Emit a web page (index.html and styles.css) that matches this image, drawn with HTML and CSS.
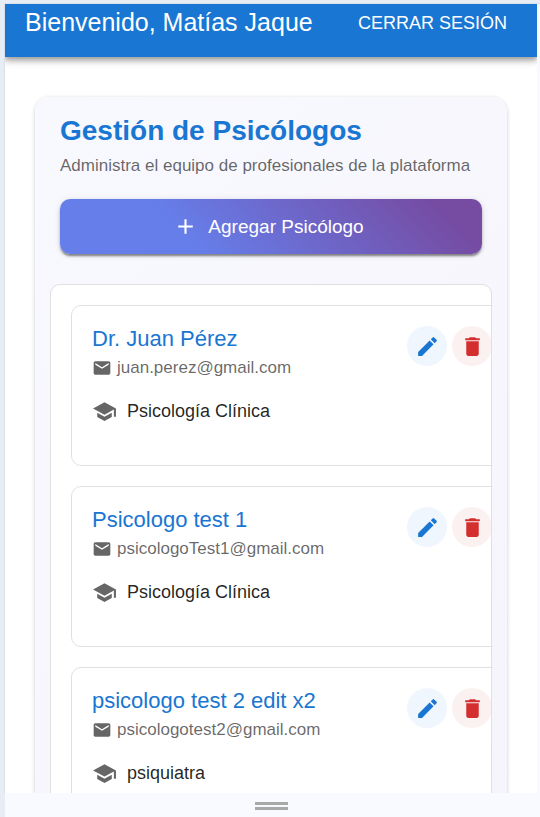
FILE: index.html
```html
<!DOCTYPE html>
<html lang="es">
<head>
<meta charset="utf-8">
<meta name="viewport" content="width=device-width, initial-scale=1">
<title>Gestión de Psicólogos</title>
<link rel="stylesheet" href="styles.css">
</head>
<body>
<svg class="sprite" aria-hidden="true">
  <symbol id="mail" viewBox="0 0 24 24"><path d="M20 4H4c-1.100 0-1.990.9-1.990 2L2 18c0 1.100.9 2 2 2h16c1.100 0 2-.9 2-2V6c0-1.100-.9-2-2-2m0 4-8 5-8-5V6l8 5 8-5z"/></symbol>
  <symbol id="school" viewBox="0 0 24 24"><path d="M5 13.180v4L12 21l7-3.820v-4L12 17zM12 3 1 9l11 6 9-4.910V17h2V9z"/></symbol>
  <symbol id="edit" viewBox="0 0 24 24"><path d="M3 17.250V21h3.750L17.810 9.940l-3.750-3.750zM20.710 7.040c.39-.39.39-1.020 0-1.410l-2.340-2.340a.996.996 0 0 0-1.410 0l-1.830 1.830 3.750 3.750z"/></symbol>
  <symbol id="delete" viewBox="0 0 24 24"><path d="M6 19c0 1.100.9 2 2 2h8c1.100 0 2-.9 2-2V7H6zM19 4h-3.500l-1-1h-5l-1 1H5v2h14z"/></symbol>
  <symbol id="add" viewBox="0 0 24 24"><path d="M19 13h-6v6h-2v-6H5v-2h6V5h2v6h6z"/></symbol>
</svg>
<div class="device">
  <div class="screen">
    <header class="appbar">
      <span class="welcome">Bienvenido, Matías Jaque</span>
      <button class="logout" type="button">CERRAR SESIÓN</button>
    </header>
    <main class="content">
      <section class="panel">
        <div class="panel-head">
          <h1 class="title">Gestión de Psicólogos</h1>
          <p class="subtitle">Administra el equipo de profesionales de la plataforma</p>
          <button class="add" type="button"><svg class="icon icon-add"><use href="#add"/></svg>Agregar Psicólogo</button>
        </div>
        <div class="list">
          <article class="card">
            <div class="card-head">
              <div class="person">
                <h2 class="name">Dr. Juan Pérez</h2>
                <p class="email"><svg class="icon-mail"><use href="#mail"/></svg>juan.perez@gmail.com</p>
              </div>
              <div class="actions">
                <button class="round edit" type="button" aria-label="Editar"><svg class="icon"><use href="#edit"/></svg></button>
                <button class="round delete" type="button" aria-label="Eliminar"><svg class="icon"><use href="#delete"/></svg></button>
              </div>
            </div>
            <p class="specialty"><svg class="icon"><use href="#school"/></svg>Psicología Clínica</p>
          </article>
          <article class="card">
            <div class="card-head">
              <div class="person">
                <h2 class="name">Psicologo test 1</h2>
                <p class="email"><svg class="icon-mail"><use href="#mail"/></svg>psicologoTest1@gmail.com</p>
              </div>
              <div class="actions">
                <button class="round edit" type="button" aria-label="Editar"><svg class="icon"><use href="#edit"/></svg></button>
                <button class="round delete" type="button" aria-label="Eliminar"><svg class="icon"><use href="#delete"/></svg></button>
              </div>
            </div>
            <p class="specialty"><svg class="icon"><use href="#school"/></svg>Psicología Clínica</p>
          </article>
          <article class="card">
            <div class="card-head">
              <div class="person">
                <h2 class="name">psicologo test 2 edit x2</h2>
                <p class="email"><svg class="icon-mail"><use href="#mail"/></svg>psicologotest2@gmail.com</p>
              </div>
              <div class="actions">
                <button class="round edit" type="button" aria-label="Editar"><svg class="icon"><use href="#edit"/></svg></button>
                <button class="round delete" type="button" aria-label="Eliminar"><svg class="icon"><use href="#delete"/></svg></button>
              </div>
            </div>
            <p class="specialty"><svg class="icon"><use href="#school"/></svg>psiquiatra</p>
          </article>
        </div>
      </section>
    </main>
  </div>
  <div class="handle"><span class="grip"></span></div>
</div>
</body>
</html>
```
FILE: styles.css
```css
* { box-sizing: border-box; }

body {
  margin: 0;
  background: #e7edf5;
  font-family: "Liberation Sans", Arial, sans-serif;
  color: rgba(0, 0, 0, 0.87);
}

h1, h2, p { margin: 0; font-weight: 400; }

button {
  border: 0;
  padding: 0;
  background: none;
  font-family: inherit;
  cursor: pointer;
}

svg { fill: currentColor; flex: none; }

.sprite { display: none; }

.device {
  display: flex;
  flex-direction: column;
  height: 100vh;
  padding: 4px 0 0 5px;
}

.screen {
  flex: 1;
  min-height: 0;
  overflow: hidden;
  background: #fff;
  border-right: 3px solid #f8faff;
  box-shadow: 0 0 1px rgba(0, 0, 0, 0.3);
}

.appbar {
  display: flex;
  justify-content: space-between;
  align-items: center;
  padding: 0 30px 16px 20px;
  background: #1976d2;
  color: #fff;
  box-shadow: 0 2px 5px rgba(0, 0, 0, 0.25), 0 5px 6px rgba(0, 0, 0, 0.14), 0 1px 12px rgba(0, 0, 0, 0.12);
}

.welcome { font-size: 25px; line-height: 37px; }

.logout { color: inherit; font-size: 18px; line-height: 32px; }

.content { padding: 40px 30px; }

.panel {
  padding: 15px;
  border-radius: 15px;
  background: linear-gradient(135deg, #f8f9ff, #f5f4fa);
  box-shadow: 0 1px 4px rgba(0, 0, 0, 0.2);
}

.panel-head { padding: 0 10px; }

.title {
  color: #1976d2;
  font-size: 28px;
  font-weight: 700;
  line-height: 38px;
}

.subtitle {
  color: rgba(0, 0, 0, 0.6);
  font-size: 17px;
  line-height: 32px;
}

.add {
  display: flex;
  justify-content: center;
  align-items: center;
  gap: 10px;
  width: 100%;
  height: 55px;
  margin: 17px 0 30px;
  border-radius: 10px;
  background: linear-gradient(45deg, #667eea 30%, #764ba2 90%);
  color: #fff;
  font-size: 19px;
  box-shadow: 0 3px 2px -1px rgba(0, 0, 0, 0.3), 0 2px 3px rgba(0, 0, 0, 0.2), 0 1px 6px rgba(0, 0, 0, 0.12);
}

.icon-add { margin-left: -5px; }

.list {
  display: flex;
  flex-direction: column;
  align-items: flex-start;
  gap: 20px;
  overflow: hidden;
  padding: 20px;
  border: 1px solid #e0e0e0;
  border-radius: 10px;
  background: #fff;
}

.card {
  min-width: 100%;
  padding: 20px 20px 40px;
  border: 1px solid #e0e0e0;
  border-radius: 10px;
}

.card-head { display: flex; }

.person { flex: 1 0 315px; }

.name { color: #1976d2; font-size: 22px; line-height: 26px; }

.email {
  display: flex;
  align-items: center;
  gap: 5px;
  color: rgba(0, 0, 0, 0.6);
  font-size: 17px;
  line-height: 32px;
}

.icon-mail { width: 20px; height: 20px; }

.actions { display: flex; gap: 5px; }

.round {
  display: grid;
  place-items: center;
  width: 40px;
  height: 40px;
  border-radius: 50%;
}

.edit { color: #1976d2; background: #f0f6fd; }

.delete { color: #d32f2f; background: #fcf1f1; }

.icon { width: 25px; height: 25px; }

.specialty {
  display: flex;
  align-items: center;
  gap: 10px;
  padding-top: 13px;
  font-size: 18px;
  line-height: 28px;
}

.specialty .icon { color: rgba(0, 0, 0, 0.6); }

.handle {
  display: grid;
  place-items: center;
  height: 24px;
  padding: 2px 2px 0 0;
  background: #f8faff;
}

.grip {
  width: 33px;
  height: 8px;
  border: solid #a8a8a8;
  border-width: 3px 0;
}
```
